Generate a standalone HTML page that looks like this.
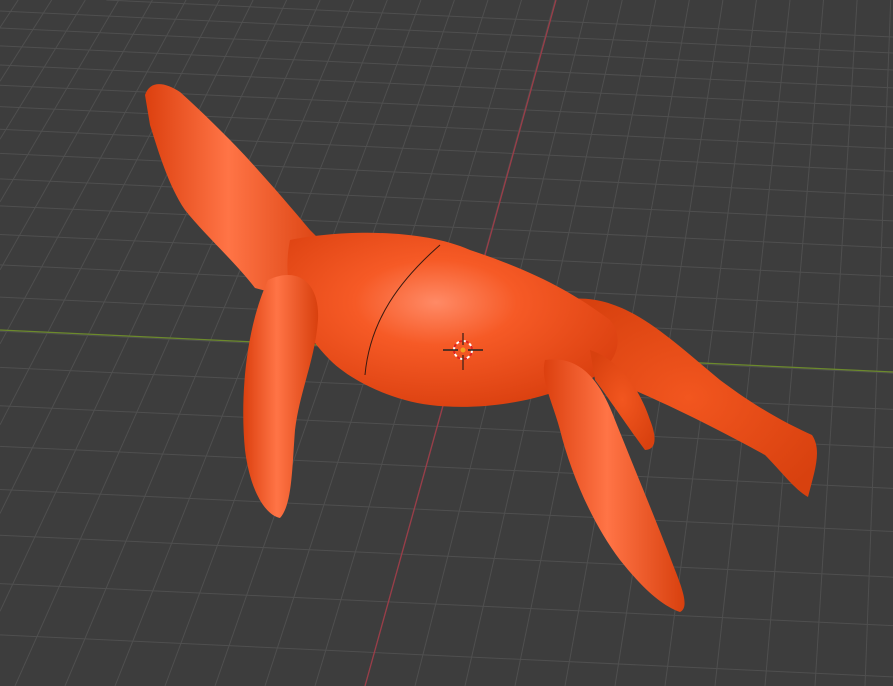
<!DOCTYPE html>
<html><head><meta charset="utf-8"><style>
html,body{margin:0;padding:0;background:#3d3d3d;overflow:hidden;width:893px;height:686px}
svg{display:block;position:absolute;left:0;top:0;overflow:hidden}
</style></head><body>
<svg id="s" width="893" height="686" viewBox="0 0 893 686" xmlns="http://www.w3.org/2000/svg">
<defs>
<radialGradient id="g1" cx="0.45" cy="0.4" r="0.7">
<stop offset="0" stop-color="#ff8a66"/><stop offset="0.35" stop-color="#f65a26"/><stop offset="1" stop-color="#d63c0c"/>
</radialGradient>
<linearGradient id="g2" x1="0" y1="0" x2="1" y2="0">
<stop offset="0" stop-color="#dc400f"/><stop offset="0.45" stop-color="#ff7446"/><stop offset="1" stop-color="#d8400e"/>
</linearGradient>
<radialGradient id="g3" cx="0.5" cy="0.5" r="0.6">
<stop offset="0" stop-color="#f2561f"/><stop offset="1" stop-color="#d8410f"/>
</radialGradient>
</defs>
<rect width="893" height="686" fill="#3d3d3d"/>
<g id="grid" stroke="#4f4f4f" stroke-width="1"></g>
<line x1="0" y1="330" x2="893" y2="372" stroke="#6c8a2c" stroke-width="1.3"/>
<line x1="556" y1="0" x2="365" y2="686" stroke="#9a3d48" stroke-width="1.3"/>
<g fill="url(#g3)">
<path d="M560 300 C620 290 660 330 720 380 C760 410 790 425 812 435 C822 450 815 470 808 497 C795 490 780 470 765 455 C720 430 660 400 610 380 Z"/>
<path d="M145 95 C150 80 165 82 180 92 C200 110 215 125 230 140 C250 160 285 200 310 230 L330 250 L300 300 L255 288 C235 262 205 235 185 210 C168 185 158 150 150 125 Z" fill="url(#g2)"/>
<path d="M290 240 C340 230 420 228 470 250 C530 270 570 290 610 320 C630 345 610 380 560 390 C520 405 470 410 430 405 C390 400 350 380 330 360 C300 330 280 290 290 240 Z" fill="url(#g1)"/>
<path d="M268 280 C300 265 320 285 318 320 C315 360 300 390 295 430 C292 470 292 505 280 518 C265 515 250 490 245 450 C240 400 245 330 268 280 Z" fill="url(#g2)"/>
<path d="M545 360 C580 355 600 380 615 420 C635 470 660 530 675 570 C685 595 688 608 680 612 C660 605 640 585 620 560 C590 520 570 470 560 430 C552 400 540 380 545 360 Z" fill="url(#g2)"/>
<path d="M590 350 C620 360 640 390 650 420 C658 440 655 450 645 450 C630 430 610 400 595 380 Z"/>
</g>
<path d="M440 245 C400 280 370 320 365 375" stroke="#3a1a10" stroke-width="1" fill="none"/>
<g transform="translate(463,350)">
<circle r="9" fill="none" stroke="#fff" stroke-width="2" stroke-dasharray="4 3"/>
<circle r="9" fill="none" stroke="#e02020" stroke-width="2" stroke-dasharray="3 4" stroke-dashoffset="4"/>
<line x1="-20" y1="0" x2="-5" y2="0" stroke="#222" stroke-width="1.5"/>
<line x1="5" y1="0" x2="20" y2="0" stroke="#222" stroke-width="1.5"/>
<line x1="0" y1="-17" x2="0" y2="-5" stroke="#5a2a1a" stroke-width="1.5"/>
<line x1="0" y1="5" x2="0" y2="20" stroke="#5a2a1a" stroke-width="1.5"/>
<circle r="2.5" fill="#f0a020"/>
</g>
</svg>
<script>
var g=document.getElementById('grid'),ns='http://www.w3.org/2000/svg';
function L(a,b,c,d){var l=document.createElementNS(ns,'line');l.setAttribute('x1',a.toFixed(1));l.setAttribute('y1',b.toFixed(1));l.setAttribute('x2',c.toFixed(1));l.setAttribute('y2',d.toFixed(1));g.appendChild(l);}
var vx=943,vy=-1400;
for(var k=-40;k<=40;k++){
  var xb=365+k*50;
  var t0=(0-vy)/(686-vy);var xt=vx+(xb-vx)*t0;
  var x1=xt,y1=0,x2=xb,y2=686;
  // clip to x range
  function clipX(xa,ya,xc,yc){return [xa,ya,xc,yc];}
  if((x1<0&&x2<0)||(x1>893&&x2>893))continue;
  var dx=x2-x1,dy=y2-y1;
  if(x1<0){var tt=(0-x1)/dx;x1=0;y1=y1+dy*tt;}
  if(x1>893){var tt=(893-x1)/dx;x1=893;y1=y1+dy*tt;}
  if(x2<0){var tt=(0-xt)/dx;x2=0;y2=0+dy*tt;}
  if(x2>893){var tt=(893-xt)/dx;x2=893;y2=0+dy*tt;}
  L(x1,y1,x2,y2);
}
var y=-5,s=16,m=42/893;
while(y<686){
  var ax=0,ay=y,bx=893,by=y+42;
  if(ay<0){ax=(0-y)/m;ay=0;}
  if(by>686){bx=(686-y)/m;by=686;}
  if(ax<bx)L(ax,ay,bx,by);
  y+=s;s*=1.06;
}
</script>
</body></html>
